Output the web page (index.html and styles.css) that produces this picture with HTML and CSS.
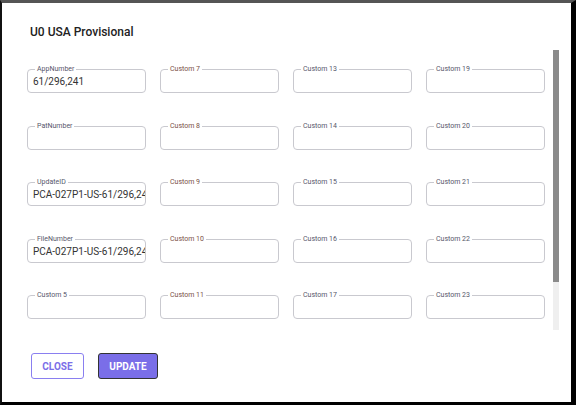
FILE: index.html
```html
<!DOCTYPE html>
<html lang="en">
<head>
    <meta charset="UTF-8">
    <meta name="viewport" content="width=device-width, initial-scale=1.0">
    <title>Edit Application</title>
    <link rel="stylesheet" href="styles.css">
</head>
<body>
    <div class="dialog">
        <h2 class="dialog-title">U0 USA Provisional</h2>

        <div class="dialog-content">
            <div class="field-scroll">
                <div class="field-grid">
                    <!-- first column: identifiers -->
                    <div class="field"><label>AppNumber</label><input type="text" value="61/296,241"></div>
                    <div class="field"><label>PatNumber</label><input type="text" value=""></div>
                    <div class="field"><label>UpdateID</label><input type="text" value="PCA-027P1-US-61/296,241"></div>
                    <div class="field"><label>FileNumber</label><input type="text" value="PCA-027P1-US-61/296,241"></div>
                    <div class="field"><label>Custom 5</label><input type="text"></div>

                    <div class="field"><label class="warm">Custom 7</label><input type="text"></div>
                    <div class="field"><label class="warm">Custom 8</label><input type="text"></div>
                    <div class="field"><label class="warm">Custom 9</label><input type="text"></div>
                    <div class="field"><label class="warm">Custom 10</label><input type="text"></div>
                    <div class="field"><label class="warm">Custom 11</label><input type="text"></div>

                    <div class="field"><label>Custom 13</label><input type="text"></div>
                    <div class="field"><label>Custom 14</label><input type="text"></div>
                    <div class="field"><label>Custom 15</label><input type="text"></div>
                    <div class="field"><label>Custom 16</label><input type="text"></div>
                    <div class="field"><label>Custom 17</label><input type="text"></div>

                    <div class="field"><label>Custom 19</label><input type="text"></div>
                    <div class="field"><label>Custom 20</label><input type="text"></div>
                    <div class="field"><label>Custom 21</label><input type="text"></div>
                    <div class="field"><label>Custom 22</label><input type="text"></div>
                    <div class="field"><label>Custom 23</label><input type="text"></div>
                </div>
            </div>
            <!-- scrollbar drawn by hand, the browser hides the native one -->
            <div class="scrollbar"><div class="scrollbar-thumb"></div></div>
        </div>

        <div class="dialog-actions">
            <button class="btn btn-outline">Close</button>
            <button class="btn btn-primary">Update</button>
        </div>
    </div>
</body>
</html>
```

FILE: styles.css
```css
html, body { margin: 0; padding: 0; }
body {
    width: 576px;
    height: 405px;
    font-family: 'Roboto', 'Liberation Sans', sans-serif;
    background: #000;
}
.dialog {
    box-sizing: border-box;
    height: 405px;
    background: white;
    border-top: 3px solid #555;
    border-left: 2px solid #111;
    border-right: 5px solid #000;
    border-bottom: 3px solid #000;
    padding: 21px 12px 0 20px;
}
.dialog-title {
    margin: 0 0 10px 8px;
    font-size: 12px;
    line-height: 16px;
    font-weight: 500;
    color: #222;
}

/* scrolling area with the field grid */
.dialog-content {
    display: flex;
    height: 280px;
}
.field-scroll {
    flex: 1;
    overflow: hidden;
    padding: 19px 8px 0 5px;
}
.scrollbar {
    width: 6px;
    background: #efefef;
}
.scrollbar-thumb {
    height: 232px;
    background: #8a8a8a;
}

.field-grid {
    display: grid;
    grid-template-columns: repeat(4, 119px);
    grid-template-rows: repeat(5, 24px);
    grid-auto-flow: column;
    column-gap: 14px;
    row-gap: 32.5px;
}
.field {
    position: relative;
    box-sizing: border-box;
    height: 24px;
    border: 1px solid #c9c9cf;
    border-radius: 4px;
}
.field label {
    position: absolute;
    top: -5px;
    left: 7px;
    padding: 0 2px;
    background: white;
    font-size: 7px;
    line-height: 8px;
    color: #56566a;
}
.field label.warm { color: #7a5046; }
.field input {
    width: 100%;
    height: 100%;
    box-sizing: border-box;
    border: none;
    outline: none;
    background: transparent;
    padding: 1px 0 0 5px;
    font-family: 'Roboto', 'Liberation Sans', sans-serif;
    font-size: 10px;
    color: #333;
    border-radius: 4px;
}

.dialog-actions {
    display: flex;
    gap: 14px;
    margin: 23px 0 0 9px;
}
.btn {
    height: 26px;
    padding: 0;
    font-family: 'Roboto', 'Liberation Sans', sans-serif;
    font-size: 10px;
    font-weight: 700;
    text-transform: uppercase;
    border-radius: 3px;
    cursor: pointer;
}
.btn-outline {
    width: 53px;
    background: white;
    color: #7b6ee8;
    border: 1px solid #8a7ff0;
}
.btn-primary {
    width: 60px;
    background: #7a6ee8;
    color: white;
    border: 1px solid #333;
}
```
